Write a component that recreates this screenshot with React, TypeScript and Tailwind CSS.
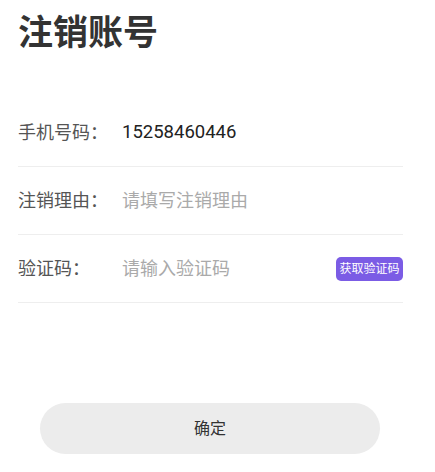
import React from "react";

const font = { fontFamily: '"Roboto", "Noto Sans CJK SC", sans-serif' };

function Row({ label, children }: { label: string; children: React.ReactNode }) {
  return (
    <div className="flex h-[68px] w-[385px] items-center border-b border-[#eeeeee]">
      <div className="w-[104px] shrink-0 text-[18px] text-[#555555]">{label}</div>
      <div className="flex flex-1 items-center justify-between">{children}</div>
    </div>
  );
}

export default function App() {
  return (
    <div className="h-[472px] w-[435px] bg-white" style={font}>
      <div className="pl-[18px] pt-[14px]">
        <h1 className="text-[35px] font-bold leading-[40px] text-[#333333]">注销账号</h1>
      </div>
      <div className="mt-[45px] flex flex-col pl-[18px]">
        <Row label="手机号码：">
          <span className="text-[18.5px] text-[#222222]">15258460446</span>
        </Row>
        <Row label="注销理由：">
          <span className="text-[18px] text-[#aaaaaa]">请填写注销理由</span>
        </Row>
        <Row label="验证码：">
          <span className="text-[18px] text-[#aaaaaa]">请输入验证码</span>
          <button className="flex h-[24px] w-[67px] items-center justify-center rounded-[5px] bg-[#7b5ce5] text-[12px] text-white">
            获取验证码
          </button>
        </Row>
      </div>
      <div className="mt-[100px] pl-[40px]">
        <button className="flex h-[51px] w-[340px] items-center justify-center rounded-full bg-[#ececec] text-[16px] text-[#333333]">
          确定
        </button>
      </div>
    </div>
  );
}
